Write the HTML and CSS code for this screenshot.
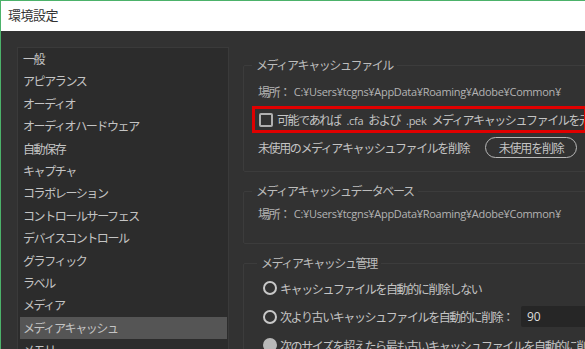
FILE: index.html
```html
<!DOCTYPE html>
<html>
<head>
    <meta charset="UTF-8">
    <title>環境設定</title>
    <link rel="stylesheet" href="styles.css">
</head>
<body>
    <div class="window">
        <div class="titlebar">環境設定</div>

        <div class="main">
            <div class="sidebar">
                <ul>
                    <li>一般</li>
                    <li>アピアランス</li>
                    <li>オーディオ</li>
                    <li>オーディオハードウェア</li>
                    <li>自動保存</li>
                    <li>キャプチャ</li>
                    <li>コラボレーション</li>
                    <li>コントロールサーフェス</li>
                    <li>デバイスコントロール</li>
                    <li>グラフィック</li>
                    <li>ラベル</li>
                    <li>メディア</li>
                    <li class="active">メディアキャッシュ</li>
                    <li>メモリ</li>
                </ul>
            </div>

            <div class="content">
                <fieldset class="group group-files">
                    <legend>メディアキャッシュファイル</legend>
                    <div class="row path"><span class="label">場所：</span><span class="latin">C:¥Users¥tcgns¥AppData¥Roaming¥Adobe¥Common¥</span></div>
                    <div class="row highlight">
                        <span class="checkbox"></span>
                        <span>可能であれば<span class="latin ext">.cfa</span>および<span class="latin ext">.pek</span>メディアキャッシュファイルを元の場所に保存</span>
                    </div>
                    <div class="row unused">
                        <span>未使用のメディアキャッシュファイルを削除</span>
                        <button class="pill">未使用を削除</button>
                    </div>
                </fieldset>

                <fieldset class="group group-db">
                    <legend>メディアキャッシュデータベース</legend>
                    <div class="row path"><span class="label">場所：</span><span class="latin">C:¥Users¥tcgns¥AppData¥Roaming¥Adobe¥Common¥</span></div>
                </fieldset>

                <fieldset class="group group-manage">
                    <legend>メディアキャッシュ管理</legend>
                    <div class="row radio-row"><span class="radio"></span>キャッシュファイルを自動的に削除しない</div>
                    <div class="row radio-row"><span class="radio"></span>次より古いキャッシュファイルを自動的に削除：<span class="field">90</span></div>
                    <div class="row radio-row"><span class="radio on"></span>次のサイズを超えたら最も古いキャッシュファイルを自動的に削除</div>
                </fieldset>
            </div>
        </div>
    </div>
</body>
</html>
```

FILE: styles.css
```css
body {
    margin: 0;
    font-family: "Noto Sans CJK JP", "Noto Sans", sans-serif;
    font-size: 12px;
    background-color: #323232;
    overflow: hidden;
}

.window {
    border-top: 1px solid #4cb26a;
    border-left: 1px solid #4cb26a;
    height: 348px;
    overflow: hidden;
}

.titlebar {
    background-color: #fff;
    color: #333;
    height: 30px;
    line-height: 28px;
    padding-left: 7px;
    font-size: 13px;
    letter-spacing: -0.5px;
}

.main {
    display: flex;
    padding: 16px 0 0 16px;
    color: #c4c4c4;
}

.sidebar {
    width: 210px;
    height: 320px;
    flex: none;
    background-color: #2c2c2c;
    border: 1px solid #3a3a3a;
    border-bottom: none;
}

.sidebar ul {
    list-style: none;
    margin: 0;
    padding: 0 1px 0 2px;
}

.sidebar li {
    height: 22.4px;
    line-height: 22.4px;
    padding-left: 3px;
    letter-spacing: -1.4px;
    white-space: nowrap;
}

.sidebar li.active {
    background-color: #555;
}

.content {
    flex: none;
    width: 400px;
    padding: 10px 0 0 14px;
}

.group {
    margin: 0 0 11px 0;
    padding: 0 0 0 14px;
    border: 1px solid #3c3c3c;
    border-radius: 2px;
    min-inline-size: 0;
}

.group legend {
    padding: 0 4px 0 4px;
    margin-left: -6px;
    letter-spacing: -1.4px;
    line-height: 16px;
    color: #bdbdbd;
}

.row {
    display: flex;
    align-items: center;
    white-space: nowrap;
    letter-spacing: -1.4px;
}

.latin {
    font-family: "Open Sans", "Noto Sans", sans-serif;
    font-size: 11px;
    letter-spacing: -0.3px;
}

.ext {
    margin: 0 5px 0 6px;
}

.path {
    height: 29px;
    color: #b4b4b4;
}

.path .label {
    margin-right: 4px;
}

.group-files {
    padding-top: 4px;
}

.highlight {
    margin-left: -6px;
    width: 325px;
    height: 21px;
    border: 3px solid #e00000;
    overflow: hidden;
    padding-left: 4px;
}

.checkbox {
    width: 10px;
    height: 10px;
    border: 2px solid #b0b0b0;
    border-radius: 2px;
    margin-right: 4px;
    flex: none;
}

.unused {
    height: 30px;
    margin-top: -1px;
    padding-bottom: 9px;
}

.pill {
    margin-left: 16px;
    width: 92px;
    height: 21px;
    border: 1px solid #b8b8b8;
    border-radius: 11px;
    background-color: transparent;
    color: #c4c4c4;
    font-family: inherit;
    font-size: 12px;
    letter-spacing: -1.2px;
    padding: 0;
}

.group-db {
    padding-top: 1px;
    padding-bottom: 17px;
}

.group-db .path {
    height: 26px;
}

.group-manage {
    padding-left: 19px;
    padding-top: 3px;
}

.radio-row {
    height: 28.5px;
}

.radio {
    width: 10px;
    height: 10px;
    border: 2px solid #c8c8c8;
    border-radius: 50%;
    margin-right: 3px;
    flex: none;
}

.radio.on {
    background-color: #b8b8b8;
    border-color: #b8b8b8;
}

.field {
    margin-left: 8px;
    width: 100px;
    height: 21px;
    line-height: 21px;
    padding-left: 6px;
    background-color: #262626;
    border-radius: 2px;
    color: #ddd;
    font-family: "Open Sans", sans-serif;
    font-size: 12px;
    letter-spacing: 0;
}
```
